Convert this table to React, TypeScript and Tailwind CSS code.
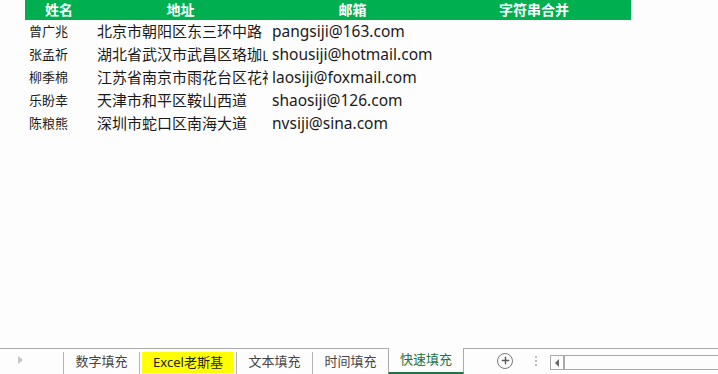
import { Plus } from 'lucide-react';

const rows = [
  { name: '曾广兆', addr: '北京市朝阳区东三环中路', email: 'pangsiji@163.com' },
  { name: '张孟祈', addr: '湖北省武汉市武昌区珞珈山路', email: 'shousiji@hotmail.com' },
  { name: '柳季棉', addr: '江苏省南京市雨花台区花神大道', email: 'laosiji@foxmail.com' },
  { name: '乐盼幸', addr: '天津市和平区鞍山西道', email: 'shaosiji@126.com' },
  { name: '陈粮熊', addr: '深圳市蛇口区南海大道', email: 'nvsiji@sina.com' },
];

const font = { fontFamily: '"Noto Sans", "Noto Sans CJK SC", sans-serif' };

function Tab({ label, yellow }: { label: string; yellow?: boolean }) {
  return (
    <div className={`${yellow ? 'w-[97px]' : 'w-[76px]'} h-full pt-[3px] flex`}>
      <div className="flex-1 border-l border-[#b4b4b4] flex">
        {yellow ? (
          <div className="flex-1 mx-[2px] mb-[1px] bg-[#ffff00] flex items-center justify-center text-[13px] text-[#222]">
            {label}
          </div>
        ) : (
          <div className="flex-1 flex items-center justify-center text-[13px] text-[#444] pb-[2px]">{label}</div>
        )}
      </div>
    </div>
  );
}

export default function App() {
  return (
    <div className="w-[718px] h-[374px] bg-[#fdfdfd] flex flex-col overflow-hidden" style={font}>
      {/* Sheet */}
      <div className="flex-1 pl-[25px]">
        <div className="w-[606px] h-[20px] bg-[#00b050] flex text-white font-bold text-[14px] leading-[20px]">
          <div className="w-[68px] text-center">姓名</div>
          <div className="w-[175px] text-center">地址</div>
          <div className="w-[169px] text-center">邮箱</div>
          <div className="flex-1 text-center">字符串合并</div>
        </div>
        {rows.map((r) => (
          <div key={r.name} className="flex h-[23px] items-center text-[#1a1a1a] whitespace-nowrap">
            <div className="w-[68px] pl-[4px] text-[13px]">{r.name}</div>
            <div className="w-[175px] pl-[4px] text-[15px] overflow-hidden">{r.addr}</div>
            <div className="w-[169px] pl-[4px] text-[15.5px]">{r.email}</div>
          </div>
        ))}
      </div>

      {/* Sheet tabs */}
      <div className="h-[26px] border-t border-[#ababab] flex items-stretch">
        <div className="w-[63px] flex items-center pl-[18px] pb-[4px]">
          <div className="w-0 h-0 border-y-[4px] border-y-transparent border-l-[5px] border-l-[#c6c6c6]" />
        </div>
        <Tab label="数字填充" />
        <Tab label="Excel老斯基" yellow />
        <Tab label="文本填充" />
        <div className="w-[76px] h-full pt-[3px] flex">
          <div className="flex-1 border-l border-[#b4b4b4] flex items-center justify-center text-[13px] text-[#444] pb-[2px]">
            时间填充
          </div>
        </div>
        <div className="w-[76px] border-x border-[#ababab] border-b-[2px] border-b-[#217346] bg-[#fdfdfd] flex items-center justify-center text-[13px] text-[#217346] -mt-[1px]">
          快速填充
        </div>
        <div className="w-[33px]" />
        <div className="flex items-center pb-[2px]">
          <div className="w-[16px] h-[16px] rounded-full border-[1.5px] border-[#7a7a7a] flex items-center justify-center">
            <Plus className="w-[11px] h-[11px] text-[#5a5a5a]" strokeWidth={3} />
          </div>
        </div>
        <div className="w-[22px] flex flex-col items-center justify-center gap-[2px] ml-[12px] pb-[2px]">
          <div className="w-[2px] h-[2px] bg-[#bdbdbd]" />
          <div className="w-[2px] h-[2px] bg-[#bdbdbd]" />
          <div className="w-[2px] h-[2px] bg-[#bdbdbd]" />
        </div>
        <div className="flex-1 pl-[3px] pt-[6px] pb-[4px]">
          <div className="h-[15px] border border-r-0 border-[#ababab] flex">
            <div className="w-[14px] border-r-[2px] border-[#ababab] flex items-center justify-center">
              <div className="w-0 h-0 border-y-[4px] border-y-transparent border-r-[4px] border-r-[#666]" />
            </div>
          </div>
        </div>
      </div>
    </div>
  );
}
